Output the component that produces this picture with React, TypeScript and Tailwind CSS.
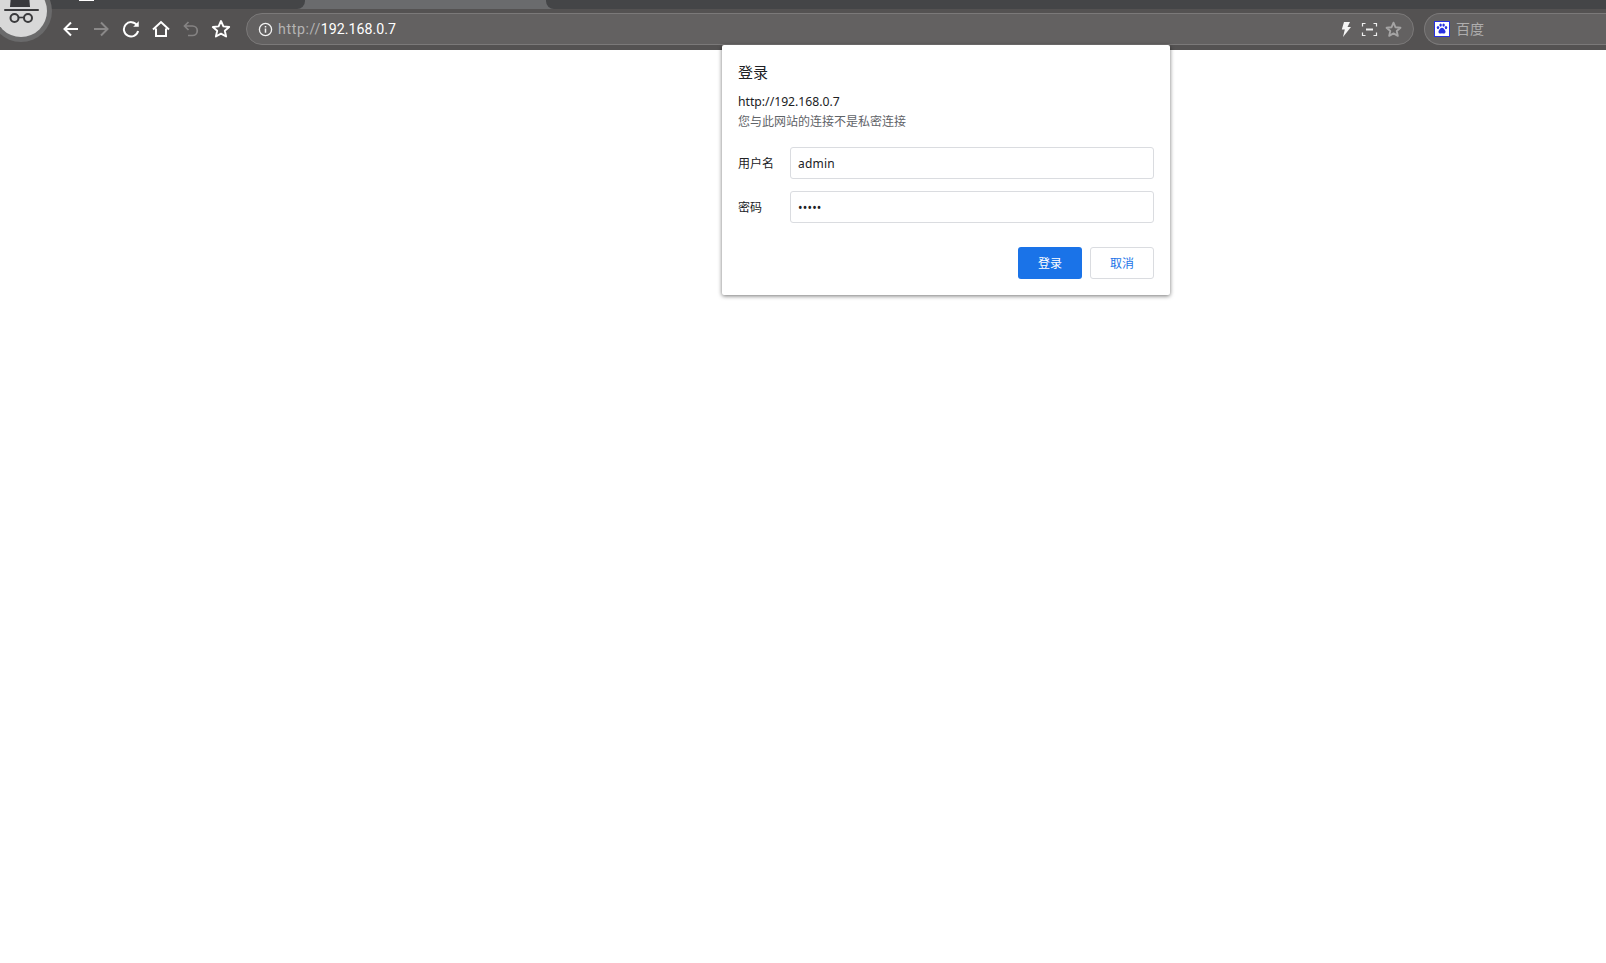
const cjk = 'font-["Noto_Sans","Noto_Sans_CJK_SC",sans-serif]';

function IconButton({ children }: { children: React.ReactNode }) {
  return <div className="w-[30px] h-6 flex items-center justify-center">{children}</div>;
}

function Incognito() {
  return (
    <div className="absolute left-[-10px] top-[-20px] w-[62px] h-[62px] rounded-full bg-[#6a6a6b] flex items-center justify-center">
      <div className="w-[52px] h-[52px] rounded-full bg-[#d8d8d8]">
        <svg width="52" height="52" viewBox="0 0 52 52" fill="none">
          <path d="M16 10h18l1 12H15z" fill="#3a3a3c" />
          <rect x="9" y="24" width="35" height="2" rx="1" fill="#3a3a3c" />
          <circle cx="19.500" cy="33" r="4" stroke="#3a3a3c" strokeWidth="2" />
          <circle cx="33" cy="33" r="4" stroke="#3a3a3c" strokeWidth="2" />
          <path d="M23.500 32.500h5.500" stroke="#3a3a3c" strokeWidth="1.600" />
        </svg>
      </div>
    </div>
  );
}

function Toolbar() {
  return (
    <div className="h-[41px] bg-[#545252] flex items-center pl-[56px] pb-[1px]">
      <IconButton>
        <svg width="18" height="18" viewBox="0 0 18 18" fill="none" stroke="#fff" strokeWidth="2">
          <path d="M16 9H3M9 2.500 2.500 9 9 15.500" />
        </svg>
      </IconButton>
      <IconButton>
        <svg width="18" height="18" viewBox="0 0 18 18" fill="none" stroke="#8a8888" strokeWidth="2">
          <path d="M2 9h13M9 2.500 15.500 9 9 15.500" />
        </svg>
      </IconButton>
      <IconButton>
        <svg width="18" height="18" viewBox="0 0 18 18" fill="none" stroke="#fff" strokeWidth="2">
          <path d="M15 5.200A7.200 7.200 0 1 0 16.100 11" />
          <path d="M16.500 1.500v5h-5" fill="#fff" strokeWidth="0.500" />
        </svg>
      </IconButton>
      <IconButton>
        <svg width="18" height="18" viewBox="0 0 18 18" fill="none" stroke="#fff" strokeWidth="2">
          <path d="M1 9.500 9 2l8 7.500M4 8.500V16h10V8.500" />
        </svg>
      </IconButton>
      <IconButton>
        <svg width="18" height="18" viewBox="0 0 18 18" fill="none" stroke="#858383" strokeWidth="1.700">
          <path d="M6.500 2 2.500 6l4 4M3 6h7.500a4.700 4.700 0 0 1 0 9.500H6" />
        </svg>
      </IconButton>
      <IconButton>
        <svg width="20" height="20" viewBox="0 0 20 20" fill="none" stroke="#fff" strokeWidth="1.900" strokeLinejoin="round">
          <path d="m10 2 2.400 5.400 5.800.6-4.400 3.800 1.300 5.700L10 14.600l-5.100 2.900 1.300-5.700L1.800 8l5.800-.6z" />
        </svg>
      </IconButton>
      <div className="ml-[10px] w-[1168px] h-8 rounded-2xl bg-[#636161] border border-[#7b7979] flex items-center pl-[11px] pr-[11px]">
        <svg width="15" height="15" viewBox="0 0 16 16" fill="none" stroke="#f2f2f2" strokeWidth="1.400">
          <circle cx="8" cy="8" r="6.500" />
          <path d="M8 7v4.500M8 4.200v1.600" strokeWidth="1.600" />
        </svg>
        <span className={`ml-[5px] pt-[1px] text-[14.2px] leading-none text-[#b5b4b4] font-["Roboto",sans-serif]`}>
          <span className="tracking-[0.6px]">http://</span>
          <span className="text-white">192.168.0.7</span>
        </span>
        <div className="ml-auto flex items-center gap-[7px]">
          <svg width="17" height="17" viewBox="0 0 17 17" fill="#f5f5f5">
            <path d="M7 1h6l-2.500 5H14L6 16l1.800-7.500H4.800z" />
          </svg>
          <svg width="17" height="17" viewBox="0 0 17 17" fill="none" stroke="#efefef" strokeWidth="1.200">
            <path d="M4.500 2.500h-3v3M12.500 2.500h3v3M4.500 14.500h-3v-3M12.500 14.500h3v-3" />
            <path d="M5 8.500h7" strokeWidth="2" />
          </svg>
          <svg width="17" height="17" viewBox="0 0 20 20" fill="none" stroke="#a5a4a4" strokeWidth="2.200" strokeLinejoin="round">
            <path d="m10 2 2.400 5.400 5.800.6-4.400 3.800 1.300 5.700L10 14.600l-5.100 2.900 1.300-5.700L1.800 8l5.800-.6z" />
          </svg>
        </div>
      </div>
      <div className="ml-[10px] flex-1 h-8 rounded-l-2xl bg-[#636161] border border-r-0 border-[#7b7979] flex items-center pl-[9px]">
        <svg width="16" height="16" viewBox="0 0 16 16">
          <rect x="0.500" y="0.500" width="15" height="15" fill="#fff" stroke="#2932e1" />
          <g fill="#2932e1">
            <ellipse cx="4" cy="6.600" rx="1.200" ry="1.600" />
            <ellipse cx="6.600" cy="4.100" rx="1.200" ry="1.700" />
            <ellipse cx="9.600" cy="4.100" rx="1.200" ry="1.700" />
            <ellipse cx="12" cy="6.600" rx="1.200" ry="1.600" />
            <path d="M8 6.800c1.500 0 2 1.400 3 2.400 1 1.200.6 3.300-1 3.300-.8 0-1.300-.3-2-.3s-1.200.3-2 .3c-1.600 0-2-2.100-1-3.300 1-1 1.500-2.400 3-2.400z" />
          </g>
        </svg>
        <span className={`ml-[6px] text-[14px] leading-none text-[#aeadad] ${cjk}`}>百度</span>
      </div>
    </div>
  );
}

function TabStrip() {
  return (
    <div className="h-[9px] bg-[#6a6b6d] flex">
      <div className="w-[305px] bg-[#444547] rounded-br-lg relative">
        <div className="absolute left-[79px] top-0 w-[15px] h-[1px] bg-white" />
      </div>
      <div className="w-[241px]" />
      <div className="flex-1 bg-[#444547] rounded-bl-lg" />
    </div>
  );
}

function Field({ label, value }: { label: string; value: string }) {
  return (
    <div className="flex items-center h-8">
      <label className="w-[52px] pt-[2px] text-xs text-[#202124]">{label}</label>
      <div className="flex-1 h-8 border border-[#dadce0] rounded-[3px] flex items-center px-[7px] pt-[2px] text-[12px] text-[#202124] tracking-[0.2px]">
        {value}
      </div>
    </div>
  );
}

function LoginDialog() {
  return (
    <div className={`absolute left-[722px] top-[45px] w-[448px] h-[250px] bg-white rounded-[2px] shadow-[0_1px_4px_rgba(0,0,0,0.55)] px-4 pt-[17px] ${cjk}`}>
      <h2 className="text-[15px] leading-5 text-[#202124]">登录</h2>
      <p className="mt-[11px] text-[12.2px] leading-[18px] text-[#202124]">http://192.168.0.7</p>
      <p className="mt-[2px] text-xs leading-[18px] text-[#5f6368]">您与此网站的连接不是私密连接</p>
      <div className="mt-4 flex flex-col gap-3">
        <Field label="用户名" value="admin" />
        <Field label="密码" value="•••••" />
      </div>
      <div className="mt-6 flex justify-end gap-2">
        <button className="w-16 h-8 pt-[2px] rounded-[3px] bg-[#1a73e8] text-white text-xs">登录</button>
        <button className="w-16 h-8 pt-[2px] rounded-[3px] border border-[#dadce0] bg-white text-[#1a73e8] text-xs">取消</button>
      </div>
    </div>
  );
}

export default function App() {
  return (
    <div className="relative h-[963px] w-full overflow-hidden bg-white">
      <TabStrip />
      <Toolbar />
      <Incognito />
      <LoginDialog />
    </div>
  );
}
